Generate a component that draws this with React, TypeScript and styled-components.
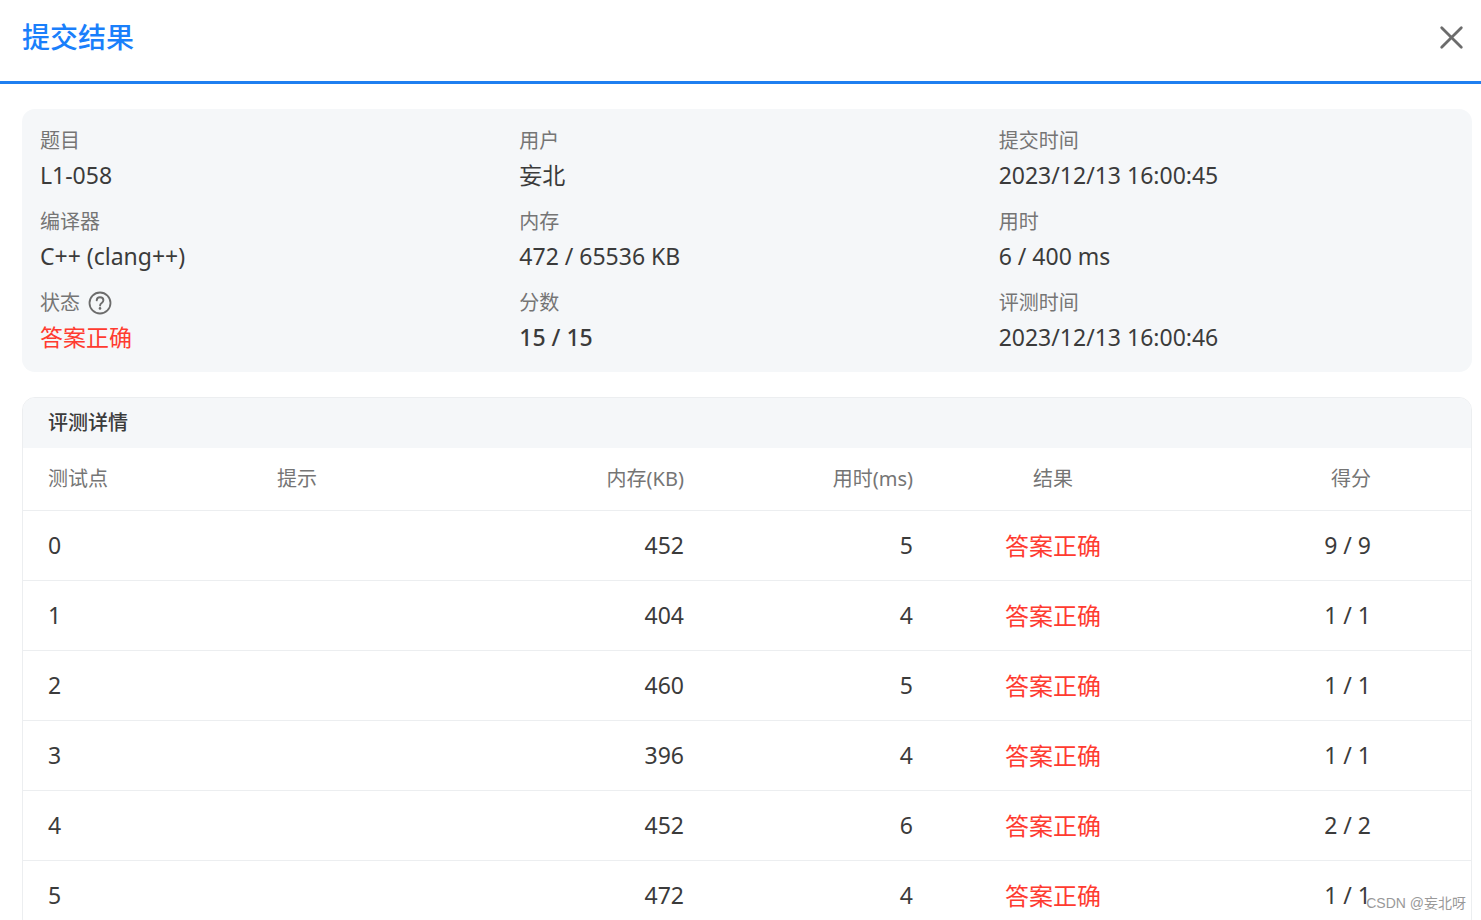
import React from "react";
import styled, { createGlobalStyle } from "styled-components";

const GlobalStyle = createGlobalStyle`
  *, *::before, *::after { box-sizing: border-box; }
  body {
    margin: 0;
    background: #fff;
    color: #3b3b3b;
    font-family: "Noto Sans", "Noto Sans CJK SC", sans-serif;
  }
`;

const Dialog = styled.div`
  position: relative;
  display: flex;
  flex-direction: column;
  height: 100vh;
  overflow: hidden;
`;

const Header = styled.header`
  display: flex;
  flex: none;
  align-items: center;
  justify-content: space-between;
  padding: 0 16px 7px 22px;
  border-bottom: 3px solid #1f7ff0;
`;

const Title = styled.h1`
  margin: 0;
  font-size: 28px;
  font-weight: 500;
  line-height: 74px;
  color: #1a7ffb;
`;

const IconButton = styled.button`
  display: flex;
  padding: 0;
  border: 0;
  background: none;
  color: #6c6c6c;
  cursor: pointer;
`;

const Body = styled.main`
  display: flex;
  flex: 1;
  flex-direction: column;
  gap: 25px;
  min-height: 0;
  overflow: hidden;
  padding: 25px 9px 0 22px;
`;

const Summary = styled.dl`
  display: grid;
  flex: none;
  grid-template-columns: repeat(3, 1fr);
  gap: 12px 24px;
  margin: 0;
  padding: 16px 18px;
  border-radius: 13px;
  background: #f5f7f9;
`;

const Field = styled.div`
  min-width: 0;
`;

const Label = styled.dt`
  display: flex;
  align-items: center;
  gap: 8px;
  font-size: 20px;
  line-height: 32px;
  color: #757575;
`;

type Tone = "normal" | "strong" | "accepted";

const Value = styled.dd<{ $tone: Tone }>`
  margin: 0;
  font-size: 23px;
  font-weight: ${({ $tone }) => ($tone === "strong" ? 500 : 400)};
  line-height: 37px;
  color: ${({ $tone }) => ($tone === "accepted" ? "#ff3b30" : "inherit")};
`;

const Details = styled.section`
  flex: none;
  border: 1px solid #eceef0;
  border-radius: 13px;
  overflow: hidden;
`;

const DetailsTitle = styled.h2`
  margin: 0;
  padding: 0 25px;
  background: #f5f7f9;
  font-size: 20px;
  font-weight: 500;
  line-height: 50px;
`;

const Table = styled.table`
  width: 100%;
  table-layout: fixed;
  border-collapse: collapse;
`;

const Column = styled.col<{ $width: number }>`
  width: ${({ $width }) => $width}px;
`;

type Align = "left" | "right" | "center";

const HeadCell = styled.th<{ $align: Align }>`
  height: 62px;
  padding: 0 26px 0 25px;
  border-bottom: 1px solid #eceef0;
  font-size: 20px;
  font-weight: 400;
  line-height: 32px;
  text-align: ${({ $align }) => $align};
  color: #757575;

  &:last-child { padding-right: 101px; }
`;

const Cell = styled.td<{ $align: Align; $accepted?: boolean }>`
  height: 70px;
  padding: 0 26px 0 25px;
  border-bottom: 1px solid #eceef0;
  font-size: ${({ $accepted }) => ($accepted ? 24 : 23)}px;
  line-height: 37px;
  text-align: ${({ $align }) => $align};
  color: ${({ $accepted }) => ($accepted ? "#ff3b30" : "inherit")};

  &:last-child { padding-right: 101px; }
`;

const Watermark = styled.span`
  position: absolute;
  right: 15px;
  bottom: 6px;
  font-family: "Liberation Sans", "Noto Sans CJK SC", sans-serif;
  font-size: 14px;
  line-height: 22px;
  color: #999;
`;

interface FieldData {
  label: string;
  value: string;
  tone?: Tone;
  help?: boolean;
}

const fields: FieldData[] = [
  { label: "题目", value: "L1-058" },
  { label: "用户", value: "妄北" },
  { label: "提交时间", value: "2023/12/13 16:00:45" },
  { label: "编译器", value: "C++ (clang++)" },
  { label: "内存", value: "472 / 65536 KB" },
  { label: "用时", value: "6 / 400 ms" },
  { label: "状态", value: "答案正确", tone: "accepted", help: true },
  { label: "分数", value: "15 / 15", tone: "strong" },
  { label: "评测时间", value: "2023/12/13 16:00:46" },
];

const columns: { title: string; align: Align; width: number }[] = [
  { title: "测试点", align: "left", width: 229 },
  { title: "提示", align: "left", width: 229 },
  { title: "内存(KB)", align: "right", width: 229 },
  { title: "用时(ms)", align: "right", width: 229 },
  { title: "结果", align: "center", width: 229 },
  { title: "得分", align: "right", width: 304 },
];

const cases = [
  { memory: 452, time: 5, score: "9 / 9" },
  { memory: 404, time: 4, score: "1 / 1" },
  { memory: 460, time: 5, score: "1 / 1" },
  { memory: 396, time: 4, score: "1 / 1" },
  { memory: 452, time: 6, score: "2 / 2" },
  { memory: 472, time: 4, score: "1 / 1" },
];

const CloseIcon = () => (
  <svg width="27" height="27" viewBox="0 0 27 27" fill="none" stroke="currentColor" strokeWidth="2.8" strokeLinecap="round" aria-hidden="true">
    <path d="M3.7 3.7 23.3 23.3M23.3 3.7 3.7 23.3" />
  </svg>
);

const HelpIcon = () => (
  <svg width="24" height="24" viewBox="0 0 24 24" fill="none" stroke="currentColor" strokeLinecap="round" strokeLinejoin="round" aria-hidden="true">
    <circle cx="12" cy="12" r="10.5" strokeWidth="1.8" />
    <path d="M8.7 9.4C8.8 7.4 10.1 6.3 12 6.3c2 0 3.4 1.2 3.4 2.9 0 1.3-.7 2-1.7 2.8-1.1.8-1.6 1.4-1.6 2.5" strokeWidth="1.9" />
    <circle cx="12" cy="17.4" r="1.3" fill="currentColor" stroke="none" />
  </svg>
);

export default function App() {
  return (
    <>
      <GlobalStyle />
      <Dialog role="dialog" aria-labelledby="dialog-title">
        <Header>
          <Title id="dialog-title">提交结果</Title>
          <IconButton type="button" aria-label="关闭">
            <CloseIcon />
          </IconButton>
        </Header>
        <Body>
          <Summary>
            {fields.map((field) => (
              <Field key={field.label}>
                <Label>
                  {field.label}
                  {field.help && (
                    <IconButton type="button" aria-label="状态说明">
                      <HelpIcon />
                    </IconButton>
                  )}
                </Label>
                <Value $tone={field.tone ?? "normal"}>{field.value}</Value>
              </Field>
            ))}
          </Summary>
          <Details aria-labelledby="details-title">
            <DetailsTitle id="details-title">评测详情</DetailsTitle>
            <Table aria-labelledby="details-title">
              <colgroup>
                {columns.map((column) => (
                  <Column key={column.title} $width={column.width} />
                ))}
              </colgroup>
              <thead>
                <tr>
                  {columns.map((column) => (
                    <HeadCell key={column.title} scope="col" $align={column.align}>
                      {column.title}
                    </HeadCell>
                  ))}
                </tr>
              </thead>
              <tbody>
                {cases.map((item, index) => (
                  <tr key={index}>
                    <Cell $align="left">{index}</Cell>
                    <Cell $align="left" />
                    <Cell $align="right">{item.memory}</Cell>
                    <Cell $align="right">{item.time}</Cell>
                    <Cell $align="center" $accepted>答案正确</Cell>
                    <Cell $align="right">{item.score}</Cell>
                  </tr>
                ))}
              </tbody>
            </Table>
          </Details>
        </Body>
        <Watermark>CSDN @妄北呀</Watermark>
      </Dialog>
    </>
  );
}
